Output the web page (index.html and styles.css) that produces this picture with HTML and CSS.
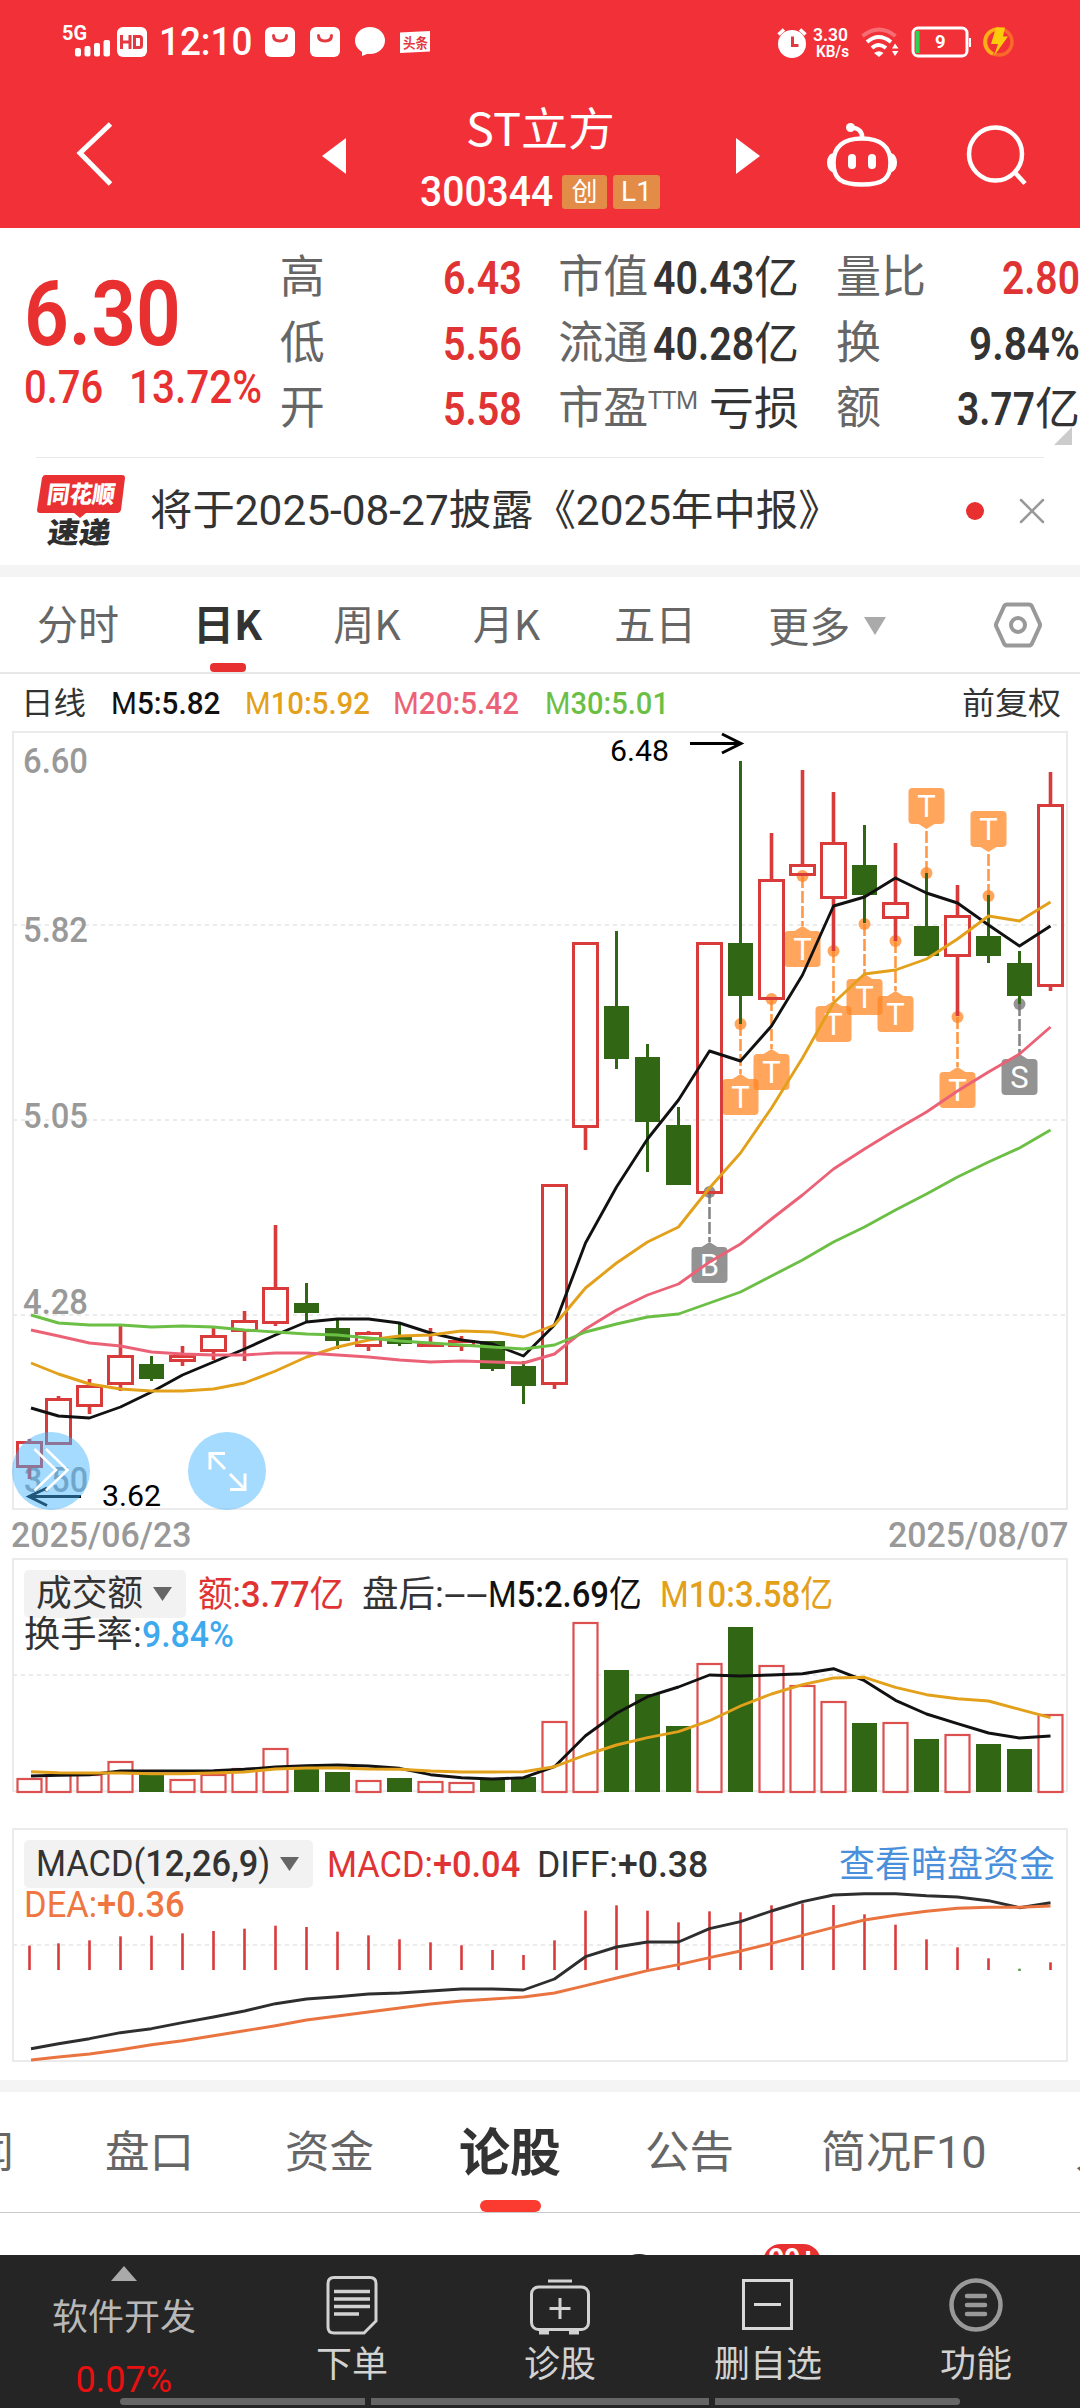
FILE: index.html
```html
<!DOCTYPE html>
<html lang="zh-CN">
<head>
<meta charset="utf-8">
<title>ST立方 300344</title>
<link rel="stylesheet" href="styles.css">
</head>
<body>
<header class="top">
  <div class="status">
    <svg class="signal" width="50" height="36" viewBox="62 22 50 36"><text x="62" y="40" font-size="21" font-weight="700" textLength="25" lengthAdjust="spacingAndGlyphs">5G</text><rect x="75" y="48" width="6" height="8.500" rx="2"/><rect x="84.500" y="46" width="6" height="10.500" rx="2"/><rect x="94" y="43" width="6" height="13.500" rx="2"/><rect x="103.500" y="40" width="6.500" height="16.500" rx="2"/></svg>
    <svg class="hd" width="30" height="30" viewBox="0 0 30 30"><rect width="30" height="30" rx="6"/><path d="M4.500 8v14M13 8v14M4.500 15h8.500M17.500 9.500v11h5q2 0 2-2v-7q0-2-2-2z" fill="none" stroke="#e23a40" stroke-width="3"/></svg>
    <span class="clock fit" data-w="93">12:10</span>
    <svg class="app" width="30" height="30" viewBox="0 0 30 30"><rect width="30" height="30" rx="6"/><path d="M8.500 8.500q0 5.500 6.500 5.500t6.500-5.500" fill="none" stroke="#e23a40" stroke-width="3" stroke-linecap="round"/></svg>
    <svg class="app2" width="30" height="30" viewBox="0 0 30 30"><rect width="30" height="30" rx="6"/><path d="M8.500 8.500q0 5.500 6.500 5.500t6.500-5.500" fill="none" stroke="#e23a40" stroke-width="3" stroke-linecap="round"/></svg>
    <svg class="app2" width="30" height="30" viewBox="0 0 30 30"><ellipse cx="15" cy="13.500" rx="15" ry="13.500"/><path d="M7 22v7l10-4z"/></svg>
    <svg class="app2" width="30" height="30" viewBox="0 0 30 30"><path d="M0 5.500 30 4v20.500L0 26z"/><text x="3" y="20.500" font-size="14" font-weight="700" fill="#e23a40" textLength="25" lengthAdjust="spacingAndGlyphs">头条</text></svg>
    <svg class="alarm" width="30" height="31" viewBox="0 0 30 31"><circle cx="15" cy="17" r="14"/><path d="M1.500 7.500 7 2.500M28.500 7.500 23 2.500" stroke="#fff" stroke-width="3.500"/><path d="M15.500 9.500v9h6" fill="none" stroke="#e23a40" stroke-width="3"/></svg>
    <svg class="speed" width="38" height="40" viewBox="0 -4 38 40"><text x="0" y="15" font-size="19" font-weight="600" textLength="35" lengthAdjust="spacingAndGlyphs">3.30</text><text x="3" y="31" font-size="16" font-weight="600" textLength="33" lengthAdjust="spacingAndGlyphs">KB/s</text></svg>
    <svg class="wifi" width="38" height="30" viewBox="0 0 38 30"><g fill="none" stroke="#fff" stroke-width="4"><path d="M1.500 9Q18 -4 34.500 9" opacity=".3"/><path d="M6 15Q17.500 5 30 15"/><path d="M11 21Q17.500 15 25 21"/></g><path d="M13 26q5-3.500 9.500 0l-4.500 4zM31 21.500l3-5 3.500 5zM31 24l3 5 3.500-5z"/></svg>
    <svg class="battery" width="62" height="32" viewBox="0 0 62 32"><rect x="2" y="2" width="54" height="28" rx="5" fill="none" stroke="#fff" stroke-width="3"/><path d="M59 12v9" stroke="#fff" stroke-width="2"/><rect x="4.500" y="5" width="4" height="22" fill="#2bd34f"/><text x="24" y="22" font-size="18.500" font-weight="700">9</text></svg>
    <svg class="bolt" width="32" height="32" viewBox="0 0 32 32"><circle cx="16" cy="16" r="13" fill="none" stroke="#f96a2a" stroke-width="3.500"/><path d="M16 3A13 13 0 0 0 10 28" fill="none" stroke="#fbb015" stroke-width="3.500"/><path d="M13 1.500h9l-2 9h5L11 30l4-12H8z" fill="#fecb0c"/></svg>
  </div>
  <nav class="titlebar">
    <svg class="back" width="40" height="68" viewBox="75 121 40 68"><path d="M110.500 126 80 155l30.500 31" fill="none" stroke="#fff" stroke-width="5"/></svg>
    <svg class="prev" width="24" height="36" viewBox="0 0 24 36"><path d="M24 0v36L0 18z"/></svg>
    <div class="name">
      <div class="stock"><span class="fit" data-w="149">ST立方</span></div>
      <div class="code"><span class="fit" data-w="133">300344</span><i class="tag cyb">创</i><i class="tag l1">L1</i></div>
    </div>
    <svg class="next" width="24" height="36" viewBox="0 0 24 36"><path d="M0 0v36l24-18z"/></svg>
    <svg class="robot" width="72" height="68" viewBox="825 122 72 68"><g fill="none" stroke="#fff" stroke-width="4.500"><path d="M861 139.500c18 0 28.500 8 28.500 24s-7 22-28.500 22-28.500-6-28.500-22 10.500-24 28.500-24z"/><path d="M861 140c1-7-3-11-11-11.500"/></g><circle cx="849.500" cy="128.500" r="4.500"/><path d="M832 154q-6 2-6 9.500t6 10zM890 154q6 2 6 9.500t-6 10z"/><rect x="847" y="155" width="8" height="15" rx="4"/><rect x="867" y="155" width="8" height="15" rx="4"/></svg>
    <svg class="search" width="62" height="64" viewBox="965 125 62 64"><circle cx="994.500" cy="156" r="26.500" fill="none" stroke="#fff" stroke-width="4.500"/><path d="m1013.500 174 10.500 11.500" stroke="#fff" stroke-width="4.500"/></svg>
  </nav>
</header>

<section class="quote">
  <div class="price">
    <div class="last"><span class="fit" data-w="157">6.30</span></div>
    <div class="chg"><span class="fit" data-w="79">0.76</span><span class="fit pct" data-w="133">13.72%</span></div>
  </div>
  <dl class="c1">
    <div><dt>高</dt><dd class="up"><span class="fit" data-w="79">6.43</span></dd></div>
    <div><dt>低</dt><dd class="up"><span class="fit" data-w="79">5.56</span></dd></div>
    <div><dt>开</dt><dd class="up"><span class="fit" data-w="79">5.58</span></dd></div>
  </dl>
  <dl class="c2">
    <div><dt>市值</dt><dd><span class="fit" data-w="101">40.43</span><em>亿</em></dd></div>
    <div><dt>流通</dt><dd><span class="fit" data-w="101">40.28</span><em>亿</em></dd></div>
    <div><dt>市盈<sup>TTM</sup></dt><dd><em>亏损</em></dd></div>
  </dl>
  <dl class="c3">
    <div><dt>量比</dt><dd class="up"><span class="fit" data-w="78">2.80</span></dd></div>
    <div><dt>换</dt><dd><span class="fit" data-w="111">9.84%</span></dd></div>
    <div><dt>额</dt><dd><span class="fit" data-w="78">3.77</span><em>亿</em></dd></div>
  </dl>
  <svg class="corner" width="18" height="18" viewBox="0 0 18 18"><path d="M18 0v18H0z" fill="#ccc"/></svg>
</section>

<section class="news">
  <svg class="logo" width="90" height="74" viewBox="36 476 90 74"><path d="M45 477h77q3 0 3 3l-4 32q-1 3-3 3H86l-6 5-6-5H40q-3 0-3-3l5-32q1-3 3-3z" fill="#e93032"/><g font-weight="900" transform="skewX(-8)"><text x="117" y="505" font-size="24" fill="#fff" textLength="68" lengthAdjust="spacingAndGlyphs">同花顺</text><text x="123" y="545" font-size="29" fill="#2e2e2e" textLength="63" lengthAdjust="spacingAndGlyphs">速递</text></g></svg>
  <span class="headline fit" data-w="691">将于2025-08-27披露《2025年中报》</span>
  <i class="dot"></i>
  <svg class="close" width="24" height="24" viewBox="0 0 24 24"><path d="M1 1l22 22M23 1 1 23" stroke="#999" stroke-width="2.500" stroke-linecap="round"/></svg>
</section>

<nav class="periods">
  <span>分时</span><span class="on">日K</span><span>周K</span><span>月K</span><span>五日</span><span class="more">更多<svg width="22" height="18" viewBox="0 0 22 18"><path d="M0 0h22L11 18z" fill="#aaa"/></svg></span>
  <svg class="gear" width="50" height="48" viewBox="0 0 50 48"><path d="M14 3.500h22q2 0 3 2l7.500 16.500q1 2 0 4L39 42.500q-1 2-3 2H14q-2 0-3-2L3.500 26q-1-2 0-4L11 5.500q1-2 3-2z" fill="none" stroke="#999" stroke-width="4"/><circle cx="25" cy="24" r="7" fill="none" stroke="#999" stroke-width="4"/></svg>
</nav>

<div class="legend">
  <span class="fit kind" data-w="65">日线</span>
  <span class="fit m5" data-w="109">M<b>5:5.82</b></span>
  <span class="fit m10" data-w="125">M<b>10:5.92</b></span>
  <span class="fit m20" data-w="126">M<b>20:5.42</b></span>
  <span class="fit m30" data-w="124">M<b>30:5.01</b></span>
  <span class="fit adj" data-w="99">前复权</span>
</div>

<svg class="kline" id="kline" width="1080" height="779" viewBox="0 731 1080 779"></svg>
<div class="dates"><span class="fit" data-w="180">2025/06/23</span><span class="fit" data-w="180">2025/08/07</span></div>

<section class="pane">
  <svg id="volume" width="1080" height="270" viewBox="0 1558 1080 270"></svg>
  <div class="info">
    <div class="line">
      <span class="chip"><span class="fit" data-w="107">成交额</span><svg width="19" height="14" viewBox="0 0 19 14"><path d="M0 0h19L9.500 14z" fill="#666"/></svg></span>
      <span class="fit up g1" data-w="146">额:<b>3.77</b>亿</span>
      <span class="fit g2" data-w="82">盘后:</span>
      <span class="fit dash" data-w="44">--</span>
      <span class="fit m5 g3" data-w="154">M<b>5:2.69</b>亿</span>
      <span class="fit m10 g4" data-w="173">M<b>10:3.58</b>亿</span>
    </div>
    <div class="line second"><span class="fit" data-w="118">换手率:</span><span class="fit rate" data-w="92"><b>9.84%</b></span></div>
  </div>
</section>

<section class="pane macd">
  <svg id="macd" width="1080" height="252" viewBox="0 1828 1080 252"></svg>
  <div class="info">
    <div class="line">
      <span class="chip"><span class="fit" data-w="234">MACD(<b>12,26,9</b>)</span><svg width="19" height="14" viewBox="0 0 19 14"><path d="M0 0h19L9.500 14z" fill="#666"/></svg></span>
      <span class="fit up h1" data-w="193">MACD:<b>+0.04</b></span>
      <span class="fit h2" data-w="171">DIFF:<b>+0.38</b></span>
      <span class="fit link" data-w="216">查看暗盘资金</span>
    </div>
    <div class="line second"><span class="fit dea" data-w="161">DEA:<b>+0.36</b></span></div>
  </div>
</section>

<nav class="sections">
  <span class="cut">新闻</span><span class="s1">盘口</span><span class="s2">资金</span><span class="s3 on">论股</span><span class="s4">公告</span><span class="s5 fit" data-w="166">简况F10</span><span class="s6">入</span>
</nav>
<div class="peek"><i class="head"></i><span class="count">99+</span></div>

<footer class="dock">
  <div class="sector">
    <svg width="26" height="15" viewBox="0 0 26 15"><path d="M13 0l13 15H0z" fill="#aaa"/></svg>
    <span class="sname">软件开发</span><span class="spct fit" data-w="97">0.07%</span>
  </div>
  <div class="act"><svg width="60" height="60" viewBox="322 2275 60 60"><g fill="none" stroke="#d2d2d2" stroke-width="3"><path d="M334 2277.500h36q6 0 6 6v37.500l-12 12h-30q-6 0-6-6v-43.500q0-6 6-6z"/><path d="M334 2291.500h36M334 2299h36M334 2306.500h36M334 2314h25" stroke-width="3.500"/></g></svg><span>下单</span></div>
  <div class="act"><svg width="62" height="60" viewBox="529 2275 62 60"><g fill="none" stroke="#d2d2d2" stroke-width="3"><rect x="531.500" y="2287" width="57" height="42.500" rx="7"/><path d="M548 2281h24M560 2298v21M549.500 2308.500h21"/><path d="M539 2332h10M569 2332h10" stroke-width="5"/></g></svg><span>诊股</span></div>
  <div class="act"><svg width="60" height="60" viewBox="738 2275 60 60"><g fill="none" stroke="#d8d8d8" stroke-width="3"><rect x="743.500" y="2280.500" width="48" height="48"/><path d="M754 2304.500h27"/></g></svg><span>删自选</span></div>
  <div class="act"><svg width="60" height="60" viewBox="946 2275 60 60"><g fill="none" stroke="#999" stroke-width="4.500" stroke-linecap="round"><circle cx="976" cy="2305" r="24.500"/><path d="M967 2296h18M967 2305h18M967 2314h18"/></g></svg><span>功能</span></div>
  <div class="home"><i></i><i class="mid"></i><i></i></div>
</footer>
<script src="charts.js"></script>
</body>
</html>
```
FILE: styles.css
```css
* { box-sizing: border-box; margin: 0; padding: 0; }
body { width: 1080px; height: 2408px; overflow: hidden; background: #fff; color: #333; font-family: Roboto, "Noto Sans CJK SC", sans-serif; }
svg { display: block; flex: none; overflow: visible; }
svg text { font-family: Roboto, "Noto Sans CJK SC", sans-serif; }
i, em { font-style: normal; }
b { font-weight: 500; }
.fit { display: inline-block; white-space: nowrap; flex: none; text-align: left; }
.fit > span { display: inline-block; transform-origin: left center; }
.up { color: #e03434; }
.m5 { color: #111; }
.m10 { color: #e3a01a; }
.m20 { color: #eb6277; }
.m30 { color: #6cbf45; }

.top { height: 228px; background: #f23038; color: #fff; fill: #fff; }
.status { height: 84px; display: flex; align-items: center; padding-left: 62px; }
.signal { margin-top: -4px; }
.hd { margin-left: 5px; }
.clock { margin-left: 12px; font-size: 38px; line-height: 44px; font-weight: 500; }
.app { margin-left: 13px; }
.app2 { margin-left: 15px; }
.alarm { margin-left: 347px; }
.speed { margin-left: 6px; }
.wifi { margin-left: 10px; }
.battery { margin-left: 12px; }
.bolt { margin-left: 10px; }

.titlebar { height: 144px; display: flex; align-items: flex-start; }
.back { margin: 35px 0 0 75px; }
.prev { margin: 54px 0 0 207px; }
.name { width: 246px; margin-left: 71px; }
.stock { height: 56px; margin-top: 15px; text-align: center; font: 45px/56px "Noto Sans CJK SC", sans-serif; }
.code { height: 36px; margin-top: 19px; margin-left: 3px; display: flex; align-items: center; font-size: 42px; line-height: 36px; font-weight: 500; }
.tag { height: 34px; border-radius: 3px; background: #e38c48; text-align: center; font-size: 26px; line-height: 34px; font-weight: 400; }
.cyb { width: 45px; margin-left: 9px; }
.l1 { width: 47px; margin-left: 6px; font-size: 28px; }
.next { margin: 54px 0 0 73px; }
.robot { margin: 37px 0 0 66px; }
.search { margin: 39px 0 0 68px; }

.quote { position: relative; height: 229px; display: flex; padding-top: 17px; font-size: 46px; line-height: 66px; }
.price { width: 280px; padding-left: 24px; color: #e93030; font-weight: 500; white-space: nowrap; }
.last { height: 110px; font-size: 91px; line-height: 138px; font-weight: 600; }
.chg { line-height: 65px; }
.pct { margin-left: 26px; }
dl > div { display: flex; justify-content: space-between; height: 65.500px; }
dt { color: #666; font-size: 45px; white-space: nowrap; }
dd { font-weight: 600; white-space: nowrap; }
em { font-weight: 400; font-size: 45px; }
.c1 { width: 243px; }
.c2 { width: 241px; margin-left: 36px; }
.c3 { width: 244px; margin-left: 37px; flex: none; }
sup { font-size: 25px; line-height: 1; vertical-align: 15px; font-family: "Noto Sans", sans-serif; letter-spacing: -.5px; }
.corner { position: absolute; right: 8px; bottom: 12px; }

.news { height: 120px; display: flex; align-items: center; padding-left: 36px; border-bottom: 12px solid #f4f4f4; background: linear-gradient(#e9e9e9, #e9e9e9) 36px 0 / 1008px 1px no-repeat; }
.headline { margin-left: 24px; font-size: 42.500px; line-height: 60px; }
.dot { width: 18px; height: 18px; border-radius: 50%; background: #e93030; margin-left: 125px; }
.close { margin-left: 36px; }

.periods { height: 97px; display: flex; padding-left: 37px; border-bottom: 2px solid #e7e7e7; color: #666; font: 41px/91px "Noto Sans CJK SC", sans-serif; }
.periods span { height: 95px; white-space: nowrap; }
.periods span:nth-child(2) { margin-left: 74px; }
.periods span:nth-child(3) { margin-left: 71px; }
.periods span:nth-child(4) { margin-left: 72px; }
.periods span:nth-child(5) { margin-left: 74px; }
.periods .on { color: #333; font-weight: 700; }
.on::after { content: ""; display: block; background: #e93030; }
.periods .on::after { width: 36px; height: 9px; margin: -5px auto 0; border-radius: 4px; }
.periods .more { display: flex; align-items: center; margin-left: 72px; }
.more svg { margin: 2px 0 0 14px; }
.gear { margin: 24px 0 0 107px; }

.legend { height: 57px; display: flex; padding-left: 21px; font-size: 31px; line-height: 60px; }
.legend .m5 { margin-left: 25px; }
.legend .m10 { margin-left: 25px; }
.legend .m20 { margin-left: 23px; }
.legend .m30 { margin-left: 26px; }
.legend .adj { margin-left: auto; margin-right: 19px; }

.dates { height: 48px; padding: 0 12px 0 11px; display: flex; justify-content: space-between; color: #999; font-size: 35px; line-height: 52px; font-weight: 500; }

.pane { height: 270px; display: grid; }
.pane > * { grid-area: 1 / 1; }
.pane.macd { height: 252px; }
.info { padding: 12px 25px 0 24px; font-size: 36px; }
.line { display: flex; line-height: 51px; height: 48px; white-space: nowrap; }
.second { margin-top: -4px; height: 40px; line-height: 43px; }
.chip { display: flex; align-items: center; padding: 0 14px 0 12px; gap: 10px; background: #f2f2f2; border-radius: 5px; }
.g1 { margin-left: 12px; }
.g2 { margin-left: 18px; }
.g4 { margin-left: 18px; }
.h1 { margin-left: 14px; }
.h2 { margin-left: 17px; }
.link { margin-left: auto; color: #4a8fdc; }
.rate { color: #3fa9ee; }
.dea { color: #ef7640; }

.sections { height: 133px; display: flex; overflow: hidden; border-top: 12px solid #f4f4f4; border-bottom: 1px solid #c8c8c8; color: #666; font-size: 44.500px; line-height: 123px; white-space: nowrap; }
.sections span { flex: none; height: 120px; }
.cut { margin-left: -75px; }
.s1 { margin-left: 91px; }
.s2 { margin-left: 91px; }
.s3 { margin-left: 85px; }
.sections .on { color: #333; font-size: 51px; font-weight: 700; }
.sections .on::after { width: 61px; height: 12px; margin: -15px auto 0; border-radius: 6px; background: #fb3b30; }
.s4 { margin-left: 84px; }
.s5 { margin-left: 87px; }
.s6 { margin-left: 88px; }

.peek { height: 42px; display: flex; overflow: hidden; padding-top: 31px; }
.head { flex: none; width: 50px; height: 50px; margin: 10px 0 0 614px; border-radius: 50%; background: #222; }
.count { width: 58px; height: 36px; margin-left: 99px; border-radius: 18px; background: #e93030; color: #fff; text-align: center; font-size: 28px; line-height: 29px; font-weight: 700; }

.dock { height: 153px; display: grid; grid-template: 141px 12px / 248px repeat(4, 208px); background: #252525; color: #d2d2d2; font-size: 36px; }
.sector { display: flex; flex-direction: column; align-items: center; padding-top: 11px; color: #b8b8b8; }
.sname { margin-top: 10px; line-height: 54px; }
.spct { color: #e81010; margin-top: 8px; line-height: 54px; }
.act { display: flex; flex-direction: column; align-items: center; padding-top: 20px; }
.act span { line-height: 54px; margin-top: 3px; }
.home { grid-column: 1 / -1; display: flex; gap: 6px; padding: 2px 0 0 120px; }
.home i { width: 245px; height: 7px; background: #666; border-radius: 4px 0 0 4px; }
.home .mid { width: 338px; border-radius: 0; }
.home i:last-child { border-radius: 0 4px 4px 0; }
```
FILE: charts.js
```js
// Squeeze or stretch each labelled run of text to the width of its column.
document.querySelectorAll('.fit').forEach(function (el) {
  var inner = document.createElement('span');
  while (el.firstChild) inner.appendChild(el.firstChild);
  el.appendChild(inner);
  var w = +el.dataset.w, natural = inner.offsetWidth;
  inner.style.transform = 'scaleX(' + w / natural + ')';
  el.style.width = w + 'px';
});

var RED = '#d93a3a', GREEN = '#306614', BLACK = '#111', GOLD = '#e3a01a', PINK = '#eb6277', LIME = '#6cbf45';

// Bar centre; the first bar sits against the frame.
function cx(i) { return i ? 58.5 + 31 * (i - 1) : 29.5; }
function line(values, colour, base, unit) {
  var pts = values.map(function (v, i) { return (i ? cx(i) : 31) + ',' + (base + v / unit).toFixed(1); }).join(' ');
  return '<polyline points="' + pts + '" fill="none" stroke="' + colour + '" stroke-width="2.9" stroke-linejoin="round"/>';
}
function frame(top, bottom, grid) {
  return '<rect x="13" y="' + (top + 1) + '" width="1054" height="' + (bottom - top - 2) + '" fill="none" stroke="#ebebeb" stroke-width="2"/>' +
    grid.map(function (y) { return '<path d="M13 ' + y + 'H1067" stroke="#ebebeb" stroke-width="2" stroke-dasharray="4 4"/>'; }).join('');
}
function label(x, y, w, s, size, colour, weight) {
  return '<text x="' + x + '" y="' + y + '" textLength="' + w + '" lengthAdjust="spacingAndGlyphs" font-size="' + size + '" font-weight="' + weight + '" fill="' + colour + '">' + s + '</text>';
}

// [up, body top, body bottom, high, low]
var candles = [
  [1,1441,1468,1439,1479],[1,1398,1445,1396,1445],[1,1385,1407,1379,1414],[1,1355,1385,1326,1391],[0,1364,1379,1356,1381],
  [1,1355,1362,1346,1366],[1,1335,1352,1328,1360],[1,1320,1332,1311,1361],[1,1287,1324,1225,1326],[0,1303,1313,1283,1321],
  [0,1328,1341,1320,1349],[1,1332,1347,1331,1351],[0,1337,1344,1323,1346],[1,1343,1347,1328,1347],[1,1340,1347,1336,1351],
  [0,1341,1369,1341,1371],[0,1366,1386,1361,1404],[1,1184,1385,1184,1389],[1,942,1128,942,1150],[0,1006,1059,931,1069],
  [0,1057,1122,1044,1172],[0,1125,1185,1107,1185],[1,942,1194,942,1194],[0,943,996,761,1024],[1,879,1000,833,1000],
  [1,864,876,770,876],[1,842,899,792,951],[0,865,895,825,923],[1,902,919,843,941],[0,926,956,873,956],
  [1,915,957,885,1016],[0,936,956,895,963],[0,963,996,951,1004],[1,804,987,772,991]
];
var ma5 = [1408,1416,1418,1407,1392,1375,1362,1349,1335,1322,1319,1319,1323,1333,1340,1344,1356,1325,1243,1187,1139,1100,1051,1061,1026,975,906,897,878,893,903,925,946,926];
var ma10 = [1363,1374,1384,1389,1391,1391,1389,1383,1371,1357,1347,1340,1336,1335,1331,1332,1337,1325,1288,1263,1242,1227,1188,1153,1108,1058,1003,974,970,959,939,916,921,902];
var ma20 = [1330,1336,1343,1346,1352,1354,1355,1355,1353,1353,1355,1357,1360,1362,1361,1362,1363,1354,1329,1310,1295,1284,1262,1244,1219,1195,1169,1149,1130,1112,1091,1072,1054,1027];
var ma30 = [1315,1323,1325,1325,1327,1326,1327,1330,1332,1334,1335,1338,1341,1343,1345,1347,1349,1345,1332,1324,1317,1314,1303,1292,1276,1260,1242,1227,1210,1194,1177,1162,1148,1130];
// [bar, letter, box top, anchor]
var marks = [[22,'B',1247,1192],[23,'T',1079,1024],[24,'T',1054,999],[25,'T',931,876],[26,'T',1006,951],[27,'T',979,924],[28,'T',996,941],[29,'T',788,873],[30,'T',1072,1017],[31,'T',811,896],[32,'S',1059,1004]];

var k = frame(731, 1510, [925, 1120, 1315]);
k += label(23, 773, 65, '6.60', 35, '#999', 500) + label(23, 942, 65, '5.82', 35, '#999', 500) + label(23, 1128, 65, '5.05', 35, '#999', 500) + label(23, 1314, 65, '4.28', 35, '#999', 500) + label(24, 1492, 64, '3.50', 35, '#999', 500);
marks.forEach(function (m) {
  var x = cx(m[0]), t = m[2], a = m[3], c = m[1] === 'T' ? '#ff8726' : '#707070', up = a < t;
  var tip = up ? t - 5 : t + 41;
  k += '<g opacity=".75" fill="' + c + '"><rect x="' + (x - 18) + '" y="' + t + '" width="36" height="36" rx="4"/>' +
    (up ? '<path d="M' + (x - 8) + ' ' + t + 'l8 -5 8 5z"/>' : '<path d="M' + (x - 8) + ' ' + (t + 36) + 'l8 5 8 -5z"/>') +
    '<circle cx="' + x + '" cy="' + a + '" r="6"/></g>' +
    '<path d="M' + x + ' ' + a + 'V' + tip + '" stroke="' + c + '" stroke-width="2.6" stroke-dasharray="12 3" opacity=".85"/>' +
    '<text x="' + x + '" y="' + (t + 29) + '" text-anchor="middle" font-size="31" fill="#fff">' + m[1] + '</text>';
});
candles.forEach(function (c, i) {
  var x = cx(i);
  if (c[0]) {
    k += '<path d="M' + x + ' ' + c[3] + 'V' + c[1] + 'M' + x + ' ' + c[2] + 'V' + c[4] + '" stroke="' + RED + '" stroke-width="3.6"/>' +
      '<rect x="' + (x - 12) + '" y="' + (c[1] + 1.5) + '" width="24" height="' + Math.max(1, c[2] - c[1] - 3) + '" fill="none" stroke="' + RED + '" stroke-width="3"/>';
  } else {
    k += '<path d="M' + x + ' ' + c[3] + 'V' + c[4] + '" stroke="' + GREEN + '" stroke-width="3"/><rect x="' + (x - 12.5) + '" y="' + c[1] + '" width="25" height="' + (c[2] - c[1]) + '" fill="' + GREEN + '"/>';
  }
});
k += line(ma5, BLACK, 0, 1) + line(ma10, GOLD, 0, 1) + line(ma20, PINK, 0, 1) + line(ma30, LIME, 0, 1);
k += label(610, 761, 59, '6.48', 29, '#000', 400) + label(102, 1506, 59, '3.62', 29, '#000', 400);
k += '<path d="M690 743.500h50M722 734l19 9.500-19 9.500M81 1496.500H30M47 1488l-18 8.500 18 9" fill="none" stroke="#000" stroke-width="3"/>';
k += '<circle cx="51" cy="1471" r="39" fill="#41b4ff" fill-opacity=".48"/><circle cx="227" cy="1471" r="39" fill="#41b4ff" fill-opacity=".48"/>';
k += '<g fill="none" stroke="#fff" stroke-width="2.6"><path d="M34.500 1449 56 1470l-21.500 20.500M46 1449l21.500 21L46 1490.500"/><path stroke-width="3" d="M225 1453.500h-15v16M210 1453.500l15 15.500M230 1489.500h15v-16M245 1489.500 230 1474"/></g>';
document.getElementById('kline').innerHTML = k;

var ups = candles.map(function (c) { return c[0]; });
var vol = [1778,1774,1774,1761,1774,1779,1774,1768,1748,1768,1772,1780,1778,1781,1782,1780,1777,1721,1622,1670,1694,1726,1663,1627,1665,1685,1701,1723,1722,1739,1734,1744,1749,1714];
var v5 = [678,676,674,663,663,663,662,658,651,647,645,648,655,674,683,687,683,650,557,490,440,411,375,378,375,371,356,392,451,492,521,549,564,558];
var v10 = [665,668,669,669,671,671,669,666,657,654,654,657,658,663,666,666,665,650,615,585,563,545,512,468,432,404,384,382,412,434,446,453,478,503];
var v = frame(1558, 1792, [1675]);
vol.forEach(function (t, i) {
  var x = cx(i);
  v += ups[i] ? '<rect x="' + (x - 12) + '" y="' + (t + 1) + '" width="24" height="' + (1791 - t) + '" fill="#fff" stroke="#dd5050" stroke-width="2.2"/>'
    : '<rect x="' + (x - 12.5) + '" y="' + t + '" width="25" height="' + (1792 - t) + '" fill="' + GREEN + '"/>';
});
v += line(v5, BLACK, 1550, 3) + line(v10, GOLD, 1550, 3);
document.getElementById('volume').innerHTML = v;

var bars = [377,370,361,349,347,340,333,326,317,321,335,346,358,367,376,390,405,361,272,256,272,307,274,277,256,250,255,283,314,358,382,415,446,427];
var diff = [686,671,656,638,626,608,591,573,551,537,530,522,519,513,507,507,510,477,410,381,366,366,326,305,273,245,225,221,221,227,231,242,263,248];
var dea = [720,711,702,689,674,662,647,632,617,600,588,576,564,552,543,537,531,519,497,474,452,434,413,393,370,346,322,300,286,274,265,262,262,258];
var m = frame(1828, 2062, [1945]);
bars.forEach(function (t, i) {
  m += '<path d="M' + cx(i) + ' ' + (1820 + t / 3) + 'V' + (i === 32 ? 1971 : 1970) + '" stroke="' + (i === 32 ? '#5f9a4a' : RED) + '" stroke-width="2.6"/>';
});
m += line(diff, '#2e2e2e', 1820, 3) + line(dea, '#ea7440', 1820, 3);
document.getElementById('macd').innerHTML = m;
```
